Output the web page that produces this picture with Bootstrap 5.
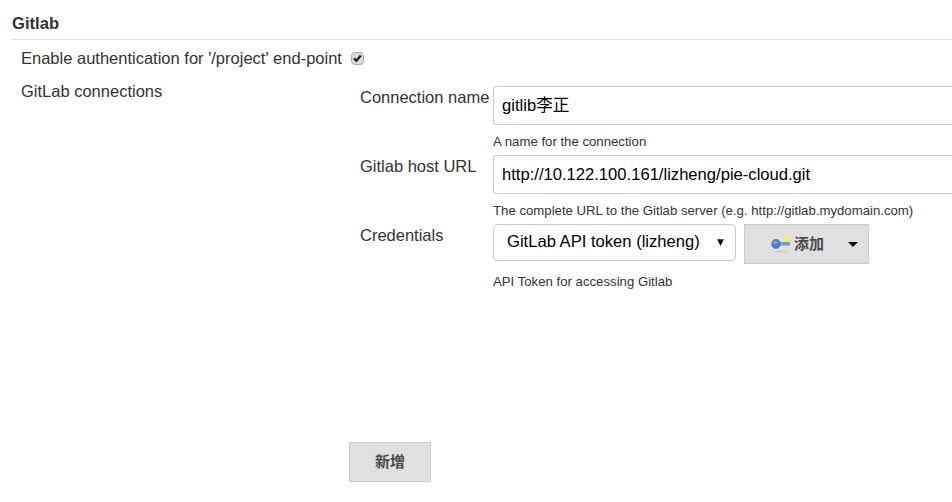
<!DOCTYPE html>
<html lang="en">
<head>
  <meta charset="UTF-8">
  <meta name="viewport" content="width=device-width, initial-scale=1.0">
  <title>Gitlab</title>
  <link href="https://cdn.jsdelivr.net/npm/bootstrap@5.3.3/dist/css/bootstrap.min.css" rel="stylesheet">
  <style>
    html, body {
      height: 100%;
      overflow: hidden;
    }
    body {
      background: #fff;
      color: #333;
      font-family: "Liberation Sans", "Noto Sans CJK SC", sans-serif;
      font-size: 16.5px;
      line-height: 20px;
    }
    .gl-page {
      padding: 14px 0 0 12px;
    }
    .gl-title {
      font-size: 16.6px;
      font-weight: 700;
      line-height: 20px;
      height: 26px;
      margin: 0;
      color: #333;
      border-bottom: 1px solid #e0e0e0;
    }
    .gl-check-row {
      padding: 8px 0 0 9px;
      height: 37px;
    }
    .gl-check {
      width: 13px;
      height: 13px;
      margin: 4px 0 0 9.5px;
      border: 1px solid #aaa;
      border-radius: 2px;
      background-color: #ddd;
    }
    .gl-check:checked {
      background-color: #ddd;
      border-color: #aaa;
      background-image: url("data:image/svg+xml,%3csvg xmlns='http://www.w3.org/2000/svg' viewBox='0 0 13 13'%3e%3cpath fill='none' stroke='%23222' stroke-width='2.8' d='M2.4 6.4l2.8 2.8 5.2-6.2'/%3e%3c/svg%3e");
    }
    .gl-left {
      flex: none;
      width: 348px;
      padding: 4px 0 0 9px;
    }
    .gl-right {
      flex: none;
      padding-top: 9px;
    }
    .gl-field-label {
      flex: none;
      width: 133px;
      padding-top: 1px;
      white-space: nowrap;
    }
    .gl-field {
      height: 69px;
    }
    /* runs to the window edge, the reference cuts it off there */
    .gl-input {
      width: 459px;
      height: 39px;
      padding: 0 8px;
      color: #000;
      font-size: 16.6px;
      border: 1px solid #ccc;
      border-right: 0;
      border-radius: 4px 0 0 4px;
      box-shadow: none;
    }
    /* the CJK fallback sits lower in the line */
    .gl-input-cjk {
      padding-bottom: 4px;
    }
    .gl-hint {
      font-size: 13.2px;
      line-height: 14px;
      margin-top: 10px;
      color: #333;
    }
    .gl-hint-low {
      margin-top: 11px;
    }
    .gl-select {
      width: 243px;
      height: 37px;
      padding: 0 0 0 13px;
      color: #000;
      font-size: 16.6px;
      border: 1px solid #ccc;
      border-radius: 4px;
      background-image: url("data:image/svg+xml,%3csvg xmlns='http://www.w3.org/2000/svg' viewBox='0 0 8 8'%3e%3cpath fill='%23111' d='M1 1h6L4 7z'/%3e%3c/svg%3e");
      background-position: right 10px center;
      background-size: 9px 9px;
    }
    .gl-add {
      width: 125px;
      height: 40px;
      padding: 0 0 0 26px;
      margin-left: 8px;
      background: #e0e0e0;
      border: 1px solid #ccc;
      border-radius: 0;
      color: #4a4a4a;
      font-size: 15px;
      font-weight: 700;
    }
    .gl-key {
      margin-right: 3px;
    }
    .gl-caret {
      width: 0;
      height: 0;
      margin-left: 24px;
      border-left: 5px solid transparent;
      border-right: 5px solid transparent;
      border-top: 5px solid #111;
    }
    .gl-new {
      width: 82px;
      height: 40px;
      padding: 0;
      margin: 153px 0 0 -11px;
      background: #e0e0e0;
      border: 1px solid #ccc;
      border-radius: 0;
      color: #4a4a4a;
      font-size: 15px;
      font-weight: 700;
    }
  </style>
</head>
<body>
<div class="gl-page">
  <h6 class="gl-title">Gitlab</h6>
  <div class="gl-check-row d-flex">
    <span>Enable authentication for '/project' end-point</span>
    <input class="form-check-input gl-check" type="checkbox" checked>
  </div>
  <div class="d-flex">
    <div class="gl-left">GitLab connections</div>
    <div class="gl-right">
      <div class="gl-field d-flex">
        <div class="gl-field-label">Connection name</div>
        <div>
          <input class="form-control gl-input gl-input-cjk" type="text" value="gitlib李正">
          <div class="gl-hint">A name for the connection</div>
        </div>
      </div>
      <div class="gl-field d-flex">
        <div class="gl-field-label">Gitlab host URL</div>
        <div>
          <input class="form-control gl-input" type="text" value="http://10.122.100.161/lizheng/pie-cloud.git">
          <div class="gl-hint">The complete URL to the Gitlab server (e.g. http://gitlab.mydomain.com)</div>
        </div>
      </div>
      <div class="d-flex">
        <div class="gl-field-label">Credentials</div>
        <div>
          <div class="d-flex align-items-start">
            <select class="form-select gl-select">
              <option>GitLab API token (lizheng)</option>
            </select>
            <button class="btn gl-add d-inline-flex align-items-center" type="button">
              <svg class="gl-key" width="20" height="20" viewBox="0 0 20 20">
                <ellipse cx="9" cy="17.5" rx="7" ry="1.2" fill="#d0d0d0"/>
                <circle cx="15" cy="5" r="3" fill="#f6ec62"/>
                <rect x="5" y="8" width="14" height="3.5" rx="1" fill="#6f9dcc"/>
                <ellipse cx="5" cy="10" rx="4.6" ry="5" fill="#4a80bd"/>
                <ellipse cx="4.4" cy="8.4" rx="2.4" ry="1.4" fill="#7fa8d2"/>
              </svg>
              <span>添加</span>
              <span class="gl-caret"></span>
            </button>
          </div>
          <div class="gl-hint gl-hint-low">API Token for accessing Gitlab</div>
        </div>
      </div>
      <button class="btn gl-new" type="button">新增</button>
    </div>
  </div>
</div>
<script src="https://cdn.jsdelivr.net/npm/bootstrap@5.3.3/dist/js/bootstrap.bundle.min.js"></script>
</body>
</html>
